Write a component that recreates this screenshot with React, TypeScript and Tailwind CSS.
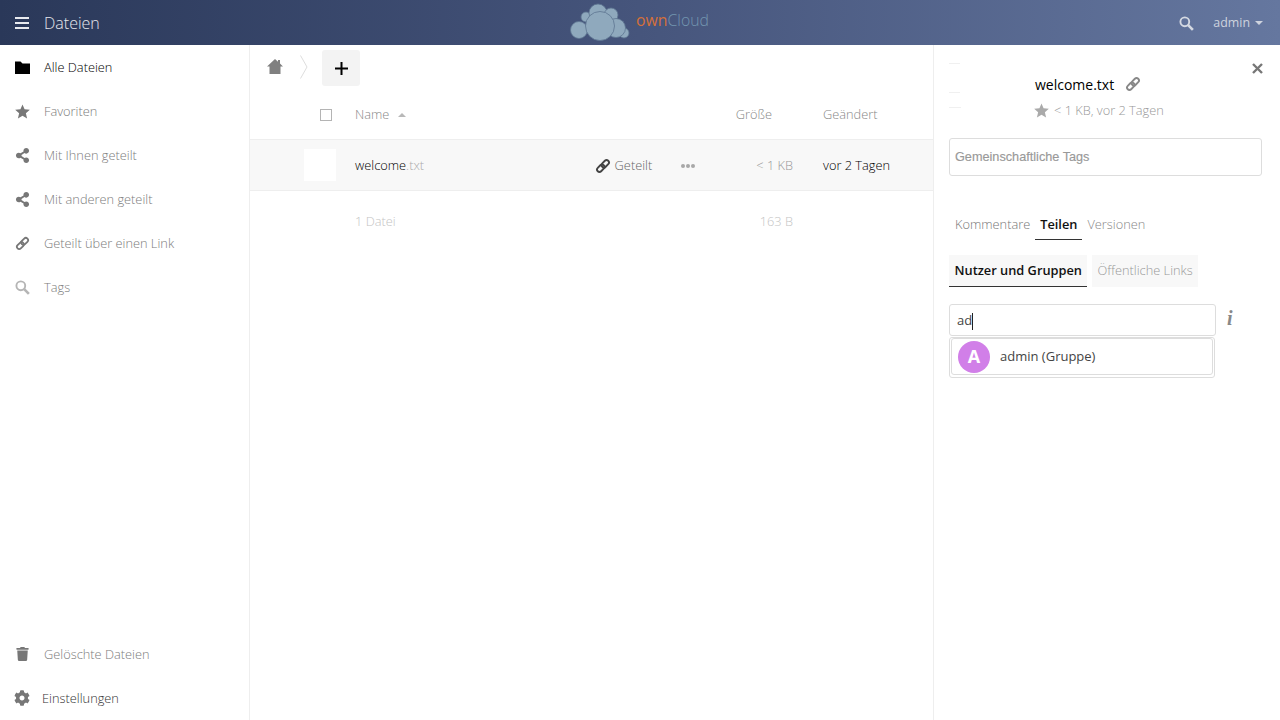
import { FaCog, FaShareAlt, FaTrash } from "react-icons/fa";

function FolderIcon({ className }: { className?: string }) {
  return (
    <svg viewBox="0 0 15 13" className={className} fill="currentColor">
      <path d="M0 0.5H5.5L7.5 2.5H15V13H0Z" />
    </svg>
  );
}

function StarIcon({ className }: { className?: string }) {
  return (
    <svg viewBox="0 0 16 16" className={className} fill="currentColor">
      <path d="M8 0.5L10.2 5.7L15.8 6.2L11.6 9.9L12.9 15.4L8 12.5L3.1 15.4L4.4 9.9L0.2 6.2L5.8 5.7Z" />
    </svg>
  );
}

function LinkIcon({ className }: { className?: string }) {
  return (
    <svg viewBox="0 0 16 16" className={className} fill="none" stroke="currentColor" strokeWidth="1.9">
      <g transform="rotate(-45 8 8)">
        <rect x="0.6" y="5.6" width="8.4" height="4.8" rx="2.4" />
        <rect x="7" y="5.6" width="8.4" height="4.8" rx="2.4" />
      </g>
    </svg>
  );
}

function SearchIcon({ className }: { className?: string }) {
  return (
    <svg viewBox="0 0 16 16" className={className} fill="none" stroke="currentColor">
      <circle cx="6.2" cy="6.2" r="4.7" strokeWidth="2" />
      <path d="M9.8 9.8L14.8 14.8" strokeWidth="2.8" />
    </svg>
  );
}

// Sidebar entries, top group
const navItems = [
  { label: "Alle Dateien", icon: FolderIcon, active: true },
  { label: "Favoriten", icon: StarIcon },
  { label: "Mit Ihnen geteilt", icon: FaShareAlt },
  { label: "Mit anderen geteilt", icon: FaShareAlt },
  { label: "Geteilt über einen Link", icon: LinkIcon },
  { label: "Tags", icon: SearchIcon, faint: true },
];

function CloudLogo() {
  return (
    <svg width="62" height="40" viewBox="0 0 62 40" className="shrink-0">
      <g fill="#8fa9bd" stroke="#5d7590" strokeWidth="0.8">
        <circle cx="9" cy="28" r="8.5" />
        <circle cx="54" cy="31" r="5" />
        <circle cx="16" cy="15" r="5" />
        <circle cx="28" cy="11" r="9" />
        <circle cx="41" cy="13" r="7" />
        <circle cx="46" cy="26" r="9.5" />
        <circle cx="30" cy="24" r="14.5" />
      </g>
    </svg>
  );
}

function Header() {
  return (
    <header className="h-[45px] shrink-0 grid grid-cols-[1fr_auto_1fr] items-center bg-gradient-to-r from-[#2a3859] via-[#46557c] to-[#65779f] text-white">
      <div className="flex items-center pl-[15px]">
        <div className="w-[14px] flex flex-col gap-[3px]">
          <span className="h-[2px] bg-[#e8eaef]" />
          <span className="h-[2px] bg-[#e8eaef]" />
          <span className="h-[2px] bg-[#e8eaef]" />
        </div>
        <span className="ml-[15px] text-[16px] font-light text-[#e6e8ed]">Dateien</span>
      </div>
      <div className="flex items-center h-[45px] pb-[2px] -ml-[1px]">
        <CloudLogo />
        <span className="ml-[4px] text-[15.8px] font-light leading-none -mt-[1px]">
          <span className="text-[#d5703a] font-normal">own</span>
          <span className="text-[#7396b0]">Cloud</span>
        </span>
      </div>
      <div className="flex items-center justify-end pr-[17px] text-[12.4px] text-[#ced3de]">
        <SearchIcon className="w-[15px] h-[15px] text-[#d5d9e2] mt-[2px]" />
        <span className="ml-[19px] mt-[2px]">admin</span>
        <span className="ml-[5px] mt-[2px] border-x-[4px] border-x-transparent border-t-[4px] border-t-[#ced3de]" />
      </div>
    </header>
  );
}

function Sidebar() {
  return (
    <aside className="w-[250px] shrink-0 border-r border-[#eeeeee] flex flex-col justify-between text-[12.8px] font-light">
      <nav>
        {navItems.map((item) => (
          <div key={item.label} className="h-[44px] flex items-center pl-[15px]">
            <item.icon
              className={`w-[15px] h-[15px] ${item.active ? "text-black" : item.faint ? "text-[#b5b5b5]" : "text-[#777777]"}`}
            />
            <span className={`ml-[14px] pt-[2px] ${item.active ? "text-[#000000]" : "text-[#7c7c7c]"}`}>{item.label}</span>
          </div>
        ))}
      </nav>
      <div>
        <div className="h-[44px] flex items-center pl-[16px]">
          <FaTrash className="w-[13px] h-[14px] text-[#777777]" />
          <span className="ml-[15px] pt-[2px] text-[#7c7c7c]">Gelöschte Dateien</span>
        </div>
        <div className="h-[44px] flex items-center pl-[14px]">
          <FaCog className="w-[16px] h-[16px] text-[#777777]" />
          <span className="ml-[12px] pt-[2px] text-[#333333]">Einstellungen</span>
        </div>
      </div>
    </aside>
  );
}

function FileList() {
  return (
    <main className="flex-1 min-w-0 text-[12.8px] font-light">
      <div className="h-[50px] pt-[5px] flex items-start pl-[17px]">
        <svg viewBox="0 0 16 15" className="w-[16px] h-[15px] mt-[9px] text-[#808080]" fill="currentColor">
          <path d="M8 0L11 2.7V1H13V4.5L16 7.5H13.5V15H2.5V7.5H0Z" />
        </svg>
        <svg width="8" height="24" viewBox="0 0 8 24" className="ml-[17px] mt-[5px]" fill="none" stroke="#dddddd">
          <path d="M0.5 0.5 L7 12 L0.5 23.5" />
        </svg>
        <button className="ml-[14px] w-[38px] h-[36px] rounded-[3px] bg-[#f3f3f3] flex items-center justify-center">
          <svg width="13" height="13" viewBox="0 0 13 13" stroke="#000000" strokeWidth="2">
            <path d="M6.5 0V13M0 6.5H13" />
          </svg>
        </button>
      </div>

      <div className="h-[45px] pb-[4px] flex items-center border-b border-[#eeeeee] text-[#888888]">
        <span className="ml-[70px] w-[12px] h-[12px] border border-[#b4b4b4]" />
        <span className="ml-[23px] flex-1 flex items-center">
          Name
          <span className="ml-[9px] border-x-[4px] border-x-transparent border-b-[4px] border-b-[#b8b8b8]" />
        </span>
        <span>Größe</span>
        <span className="ml-[51px] w-[110px]">Geändert</span>
      </div>

      <div className="h-[51px] flex items-center bg-[#f8f8f8] border-b border-[#eeeeee]">
        <span className="ml-[54px] w-[32px] h-[32px] bg-white" />
        <span className="ml-[19px] pt-[2px] flex-1">
          <span className="text-black">welcome</span>
          <span className="text-[#aaaaaa]">.txt</span>
        </span>
        <LinkIcon className="w-[16px] h-[16px] mt-[2px] text-[#444444]" />
        <span className="ml-[4px] pt-[2px] text-[#666666]">Geteilt</span>
        <span className="ml-[29px] mt-[2px] flex gap-[1px]">
          <span className="w-[4px] h-[4px] rounded-full bg-[#a8a8a8]" />
          <span className="w-[4px] h-[4px] rounded-full bg-[#a8a8a8]" />
          <span className="w-[4px] h-[4px] rounded-full bg-[#a8a8a8]" />
        </span>
        <span className="ml-[61px] pt-[2px] text-[#999999]">&lt; 1 KB</span>
        <span className="ml-[30px] pt-[2px] w-[110px] text-black">vor 2 Tagen</span>
      </div>

      <div className="h-[62px] flex items-center text-[#c4c4c4]">
        <span className="ml-[105px] flex-1">1 Datei</span>
        <span>163 B</span>
        <span className="ml-[30px] w-[110px]" />
      </div>
    </main>
  );
}

function DetailsPanel() {
  return (
    <aside className="w-[347px] shrink-0 border-l border-[#eeeeee] pl-[15px] pr-[18px] text-[12.8px]">
      <div className="h-[93px] flex">
        {/* blank thumbnail only leaves a few hairlines behind */}
        <div className="w-[85px] shrink-0 pt-[18px]">
          <div className="w-[11px] h-[1px] bg-[#f0f0f0]" />
          <div className="w-[11px] h-[1px] mt-[28px] bg-[#f0f0f0]" />
          <div className="w-[12px] h-[1px] mt-[14px] bg-[#f0f0f0]" />
        </div>
        <div className="flex-1 pt-[29px] font-light">
          <div className="flex items-center h-[20px] ml-[1px] text-[14px] text-black font-normal">
            welcome.txt
            <LinkIcon className="ml-[11px] w-[16px] h-[16px] text-[#888888]" />
          </div>
          <div className="flex items-center mt-[7px] text-[#999999]">
            <StarIcon className="w-[15px] h-[15px] text-[#aaaaaa]" />
            <span className="ml-[5px]">&lt; 1 KB, vor 2 Tagen</span>
          </div>
        </div>
        <svg viewBox="0 0 11 11" className="w-[11px] h-[11px] mt-[18px] -mr-[1px]" stroke="#777777" strokeWidth="2.4">
          <path d="M1 1L10 10M10 1L1 10" />
        </svg>
      </div>

      <div className="h-[38px] pt-[1px] border border-[#dddddd] rounded-[3px] flex items-center pl-[5px] text-[12.7px] text-[#999999] font-['Liberation_Sans',sans-serif] [-webkit-text-stroke:0.15px_#999999]">
        Gemeinschaftliche Tags
      </div>

      <div className="mt-[33px] flex h-[31px] pl-[1px]">
        <span className="px-[5px] pt-[6px] font-light text-[#777777]">Kommentare</span>
        <span className="px-[5px] pt-[6px] h-[31px] border-b border-[#333333] font-semibold text-[#111111]">Teilen</span>
        <span className="px-[5px] pt-[6px] font-light text-[#888888]">Versionen</span>
      </div>

      <div className="mt-[15px] flex gap-[5px] h-[32px]">
        <span className="px-[5.5px] flex items-center bg-[#f8f8f8] border-b border-[#333333] font-semibold text-[#111111]">
          Nutzer und Gruppen
        </span>
        <span className="px-[5px] flex items-center bg-[#f8f8f8] font-light text-[#999999]">Öffentliche Links</span>
      </div>

      <div className="mt-[17px] flex items-center">
        <div className="w-[267px] h-[32px] border border-[#dddddd] rounded-[3px] flex items-center pl-[7px] pt-[2px] text-[13px] text-[#444444]">
          ad<span className="w-[1px] h-[17px] bg-[#222222]" />
        </div>
        <span className="ml-[11px] -mt-[4px] text-[20px] font-bold italic text-[#888888] font-['Liberation_Serif',serif]">i</span>
      </div>

      <div className="mt-[1px] w-[266px] h-[41px] border border-[#dddddd] rounded-[3px] px-[1px]">
        <div className="h-[37px] border border-[#dddddd] rounded-[3px] flex items-center pl-[6px]">
          <span className="w-[32px] h-[32px] rounded-full bg-[#d17fe8] flex items-center justify-center text-[18px] font-bold text-white">A</span>
          <span className="ml-[10px] text-[13px] text-[#444444]">admin (Gruppe)</span>
        </div>
      </div>
    </aside>
  );
}

export default function App() {
  return (
    <div className="h-screen flex flex-col overflow-hidden bg-white font-['Open_Sans',sans-serif]">
      <Header />
      <div className="flex-1 min-h-0 flex">
        <Sidebar />
        <FileList />
        <DetailsPanel />
      </div>
    </div>
  );
}
